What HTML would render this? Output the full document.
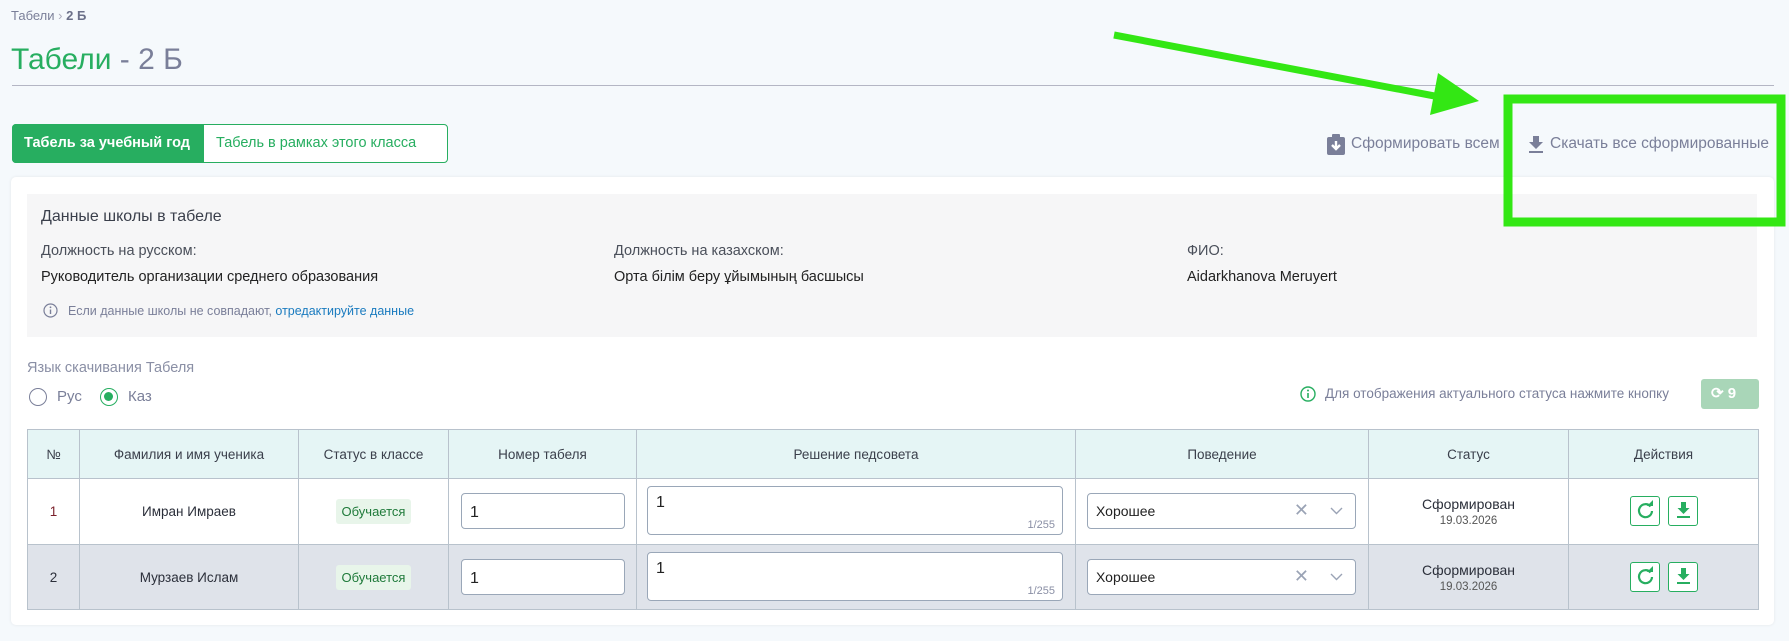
<!DOCTYPE html>
<html><head><meta charset="utf-8"><style>
*{box-sizing:border-box;margin:0;padding:0}
body{width:1789px;height:641px;background:#f5f9fc;font-family:"Liberation Sans",sans-serif;position:relative;overflow:hidden;color:#2b2f3a}
.a{position:absolute;white-space:nowrap}
.g{color:#7a7f99}
td,th{border:1px solid #b8c2cc;text-align:center;font-size:13.5px;font-weight:normal}
table{border-collapse:collapse;position:absolute;left:27px;top:429px;width:1732px}
th{background:#e5f5f5;height:49px;color:#3a3f4b}
tr.r1 td{height:66px;background:#fff}
tr.r2 td{height:65px;background:#dfe3ea}
td{position:relative}
.inp{position:absolute;border:1px solid #9aa7b8;border-radius:4px;background:#fff;text-align:left;font-size:16px;color:#222}
.badge{display:inline-block;background:#e8f5ea;color:#1f7a3a;border-radius:3px;padding:5px 6px;font-size:13px}
.btn{position:absolute;width:30px;height:30px;border:1.5px solid #27ae60;border-radius:3px;background:#fff;top:17px}
</style></head><body>
<div class="a g" style="left:11px;top:8px;font-size:13px">Табели <span style="color:#aab">&#8250;</span> <b style="color:#6b7089">2 Б</b></div>
<div class="a" style="left:11px;top:43px;font-size:30px;color:#27ae60">Табели <span class="g">- 2 Б</span></div>
<div class="a" style="left:12px;top:85px;width:1762px;height:1px;background:#b4b6c4"></div>

<div class="a" style="left:12px;top:124px;width:436px;height:39px;border:1px solid #27ae60;border-radius:4px;background:#fff"></div>
<div class="a" style="left:12px;top:124px;width:192px;height:39px;background:#27ae60;border-radius:4px 0 0 4px;color:#fff;font-weight:bold;font-size:14.5px;line-height:39px;padding-left:12px">Табель за учебный год</div>
<div class="a" style="left:216px;top:124px;line-height:39px;font-size:14.5px;color:#27ae60">Табель в рамках этого класса</div>

<svg class="a" style="left:1326px;top:134px" width="20" height="22" viewBox="0 0 20 22"><rect x="1" y="3" width="18" height="18" rx="2" fill="#7a7f99"/><rect x="6" y="0" width="8" height="5" rx="1" fill="#7a7f99"/><path d="M10 7v7M6 11l4 4 4-4" stroke="#fff" stroke-width="2.4" fill="none"/></svg>
<div class="a g" style="left:1351px;top:135px;font-size:15.5px">Сформировать всем</div>
<svg class="a" style="left:1527px;top:135px" width="18" height="18" viewBox="0 0 18 18"><path d="M6 1h6v6h4l-7 7-7-7h4z" fill="#7a7f99"/><rect x="2" y="16" width="14" height="2" fill="#7a7f99"/></svg>
<div class="a g" style="left:1550px;top:135px;font-size:15.5px">Скачать все сформированные</div>

<div class="a" style="left:11px;top:177px;width:1763px;height:448px;background:#fff;border-radius:5px;box-shadow:0 0 3px rgba(0,0,0,.08)"></div>
<div class="a" style="left:27px;top:194px;width:1730px;height:143px;background:#f6f6f7"></div>
<div class="a" style="left:41px;top:208px;font-size:16px;color:#3a3f4b">Данные школы в табеле</div>
<div class="a" style="left:41px;top:243px;font-size:14.5px;color:#4a4f5a">Должность на русском:</div>
<div class="a" style="left:41px;top:269px;font-size:14.5px;color:#222">Руководитель организации среднего образования</div>
<div class="a" style="left:614px;top:243px;font-size:14.5px;color:#4a4f5a">Должность на казахском:</div>
<div class="a" style="left:614px;top:269px;font-size:14.5px;color:#222">Орта білім беру ұйымының басшысы</div>
<div class="a" style="left:1187px;top:243px;font-size:14.5px;color:#4a4f5a">ФИО:</div>
<div class="a" style="left:1187px;top:269px;font-size:14.5px;color:#222">Aidarkhanova Meruyert</div>
<svg class="a" style="left:43px;top:303px" width="15" height="15"><circle cx="7.5" cy="7.5" r="6.5" fill="none" stroke="#7a7f99" stroke-width="1.2"/><path d="M7.5 6.5v4.5" stroke="#7a7f99" stroke-width="1.4"/><circle cx="7.5" cy="4.3" r=".9" fill="#7a7f99"/></svg>
<div class="a" style="left:68px;top:304px;font-size:12.5px;color:#7a7f99">Если данные школы не совпадают, <span style="color:#1a7bbf">отредактируйте данные</span></div>

<div class="a g" style="left:27px;top:360px;font-size:14.5px;color:#8a8fa5">Язык скачивания Табеля</div>
<div class="a" style="left:29px;top:388px;width:18px;height:18px;border:1.5px solid #7a7f99;border-radius:50%"></div>
<div class="a g" style="left:57px;top:388px;font-size:15px">Рус</div>
<div class="a" style="left:100px;top:388px;width:18px;height:18px;border:1.5px solid #27ae60;border-radius:50%"><div style="margin:3px;width:9px;height:9px;background:#27ae60;border-radius:50%"></div></div>
<div class="a g" style="left:128px;top:388px;font-size:15px">Каз</div>

<svg class="a" style="left:1300px;top:386px" width="16" height="16"><circle cx="8" cy="8" r="7" fill="none" stroke="#27ae60" stroke-width="1.4"/><path d="M8 7v5" stroke="#27ae60" stroke-width="1.6"/><circle cx="8" cy="4.5" r="1" fill="#27ae60"/></svg>
<div class="a" style="left:1325px;top:386px;font-size:13.5px;color:#7a7f99">Для отображения актуального статуса нажмите кнопку</div>
<div class="a" style="left:1701px;top:379px;width:58px;height:30px;background:#a9d6b8;border-radius:3px;color:#fff;font-weight:bold;font-size:15px;line-height:30px;padding-left:10px">&#10227; 9</div>

<table>
<tr><th style="width:52px">№</th><th style="width:219px">Фамилия и имя ученика</th><th style="width:150px">Статус в классе</th><th style="width:188px">Номер табеля</th><th style="width:439px">Решение педсовета</th><th style="width:293px">Поведение</th><th style="width:200px">Статус</th><th>Действия</th></tr>
<tr class="r1"><td style="color:#7a1f2a">1</td><td>Имран Имраев</td><td><span class="badge">Обучается</span></td>
<td><div class="inp" style="left:12px;top:14px;width:164px;height:36px;padding:10px 8px">1</div></td>
<td><div class="inp" style="left:10px;top:7px;width:416px;height:49px;padding:7px 8px">1<span style="position:absolute;right:7px;bottom:3px;font-size:11px;color:#8a8fa5">1/255</span></div></td>
<td><div class="inp" style="left:11px;top:14px;width:269px;height:36px;padding:9px 8px;font-size:14px">Хорошее<span style="position:absolute;right:46px;top:6px;color:#9aa3b5;font-size:18px">&#10005;</span><svg style="position:absolute;right:12px;top:13px" width="13" height="8"><path d="M1 1l5.5 5.5L12 1" stroke="#9aa3b5" fill="none" stroke-width="1.4"/></svg></div></td>
<td><div style="font-size:14px;margin-bottom:3px">Сформирован</div><div style="font-size:11.5px;color:#555">19.03.2026</div></td>
<td><div class="btn" style="left:61px"><svg width="27" height="27" viewBox="0 0 27 27"><path d="M18.5 9.5A6.5 6.5 0 1 0 20 14" stroke="#27ae60" stroke-width="2.2" fill="none"/><path d="M15 7h6V1z" fill="#27ae60" transform="translate(0 2)"/></svg></div><div class="btn" style="left:99px"><svg width="27" height="27" viewBox="0 0 27 27"><path d="M11 5h5v6h3.5L13.5 17 7.5 11H11z" fill="#27ae60"/><rect x="7" y="19" width="13" height="2" fill="#27ae60"/></svg></div></td></tr>
<tr class="r2"><td>2</td><td>Мурзаев Ислам</td><td><span class="badge">Обучается</span></td>
<td><div class="inp" style="left:12px;top:14px;width:164px;height:36px;padding:10px 8px">1</div></td>
<td><div class="inp" style="left:10px;top:7px;width:416px;height:49px;padding:7px 8px">1<span style="position:absolute;right:7px;bottom:3px;font-size:11px;color:#8a8fa5">1/255</span></div></td>
<td><div class="inp" style="left:11px;top:14px;width:269px;height:36px;padding:9px 8px;font-size:14px">Хорошее<span style="position:absolute;right:46px;top:6px;color:#9aa3b5;font-size:18px">&#10005;</span><svg style="position:absolute;right:12px;top:13px" width="13" height="8"><path d="M1 1l5.5 5.5L12 1" stroke="#9aa3b5" fill="none" stroke-width="1.4"/></svg></div></td>
<td><div style="font-size:14px;margin-bottom:3px">Сформирован</div><div style="font-size:11.5px;color:#555">19.03.2026</div></td>
<td><div class="btn" style="left:61px"><svg width="27" height="27" viewBox="0 0 27 27"><path d="M18.5 9.5A6.5 6.5 0 1 0 20 14" stroke="#27ae60" stroke-width="2.2" fill="none"/><path d="M15 7h6V1z" fill="#27ae60" transform="translate(0 2)"/></svg></div><div class="btn" style="left:99px"><svg width="27" height="27" viewBox="0 0 27 27"><path d="M11 5h5v6h3.5L13.5 17 7.5 11H11z" fill="#27ae60"/><rect x="7" y="19" width="13" height="2" fill="#27ae60"/></svg></div></td></tr>
</table>

<svg class="a" style="left:0;top:0" width="1789" height="641">
<line x1="1114" y1="35" x2="1445" y2="98" stroke="#33e714" stroke-width="7"/>
<polygon points="1438,73 1479,101 1430,115" fill="#33e714"/>
<rect x="1508" y="99" width="273" height="123" fill="none" stroke="#33e714" stroke-width="9"/>
</svg>
</body></html>
